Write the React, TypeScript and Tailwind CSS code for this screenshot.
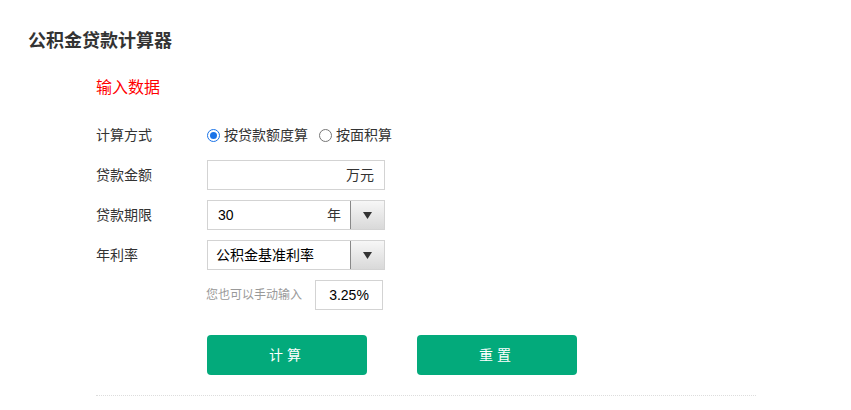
import { useState } from 'react'

const font = "font-['Liberation_Sans','Noto_Sans_CJK_SC',sans-serif]"

function Radio({ checked, label, onClick }: { checked: boolean; label: string; onClick: () => void }) {
  return (
    <label onClick={onClick} className="flex items-center gap-[4px] cursor-pointer">
      <span
        className={`w-[13px] h-[13px] rounded-full border flex items-center justify-center bg-white ${
          checked ? 'border-[#1a73e8]' : 'border-[#767676]'
        }`}
      >
        {checked && <span className="w-[7px] h-[7px] rounded-full bg-[#1a73e8]" />}
      </span>
      <span>{label}</span>
    </label>
  )
}

function Caret() {
  return (
    <div className="w-[34px] h-full border-l border-[#888] bg-gradient-to-b from-[#f7f7f7] to-[#d9d9d9] flex items-center justify-center">
      <svg width="9" height="7" viewBox="0 0 9 7">
        <path d="M0 0h9L4.5 7z" fill="#333" />
      </svg>
    </div>
  )
}

export default function App() {
  const [mode, setMode] = useState<'amount' | 'area'>('amount')

  return (
    <div className={`w-[851px] h-[410px] bg-white text-[#333] ${font}`}>
      <h1 className="pt-[29px] pl-[28px] text-[18px] leading-[24px] font-bold text-[#333]">公积金贷款计算器</h1>

      <div className="ml-[96px] w-[660px]">
        <h2 className="mt-[25px] text-[16px] leading-[20px] text-[#ff0000]">输入数据</h2>

        <div className="text-[14px]">
          {/* 计算方式 */}
          <div className="mt-[27px] flex items-center h-[20px]">
            <span className="w-[111px]">计算方式</span>
            <div className="flex items-center gap-[11px]">
              <Radio checked={mode === 'amount'} label="按贷款额度算" onClick={() => setMode('amount')} />
              <Radio checked={mode === 'area'} label="按面积算" onClick={() => setMode('area')} />
            </div>
          </div>

          {/* 贷款金额 */}
          <div className="mt-[15px] flex items-center h-[30px]">
            <span className="w-[111px]">贷款金额</span>
            <div className="w-[178px] h-[30px] border border-[#d3d3d3] flex items-center justify-end pr-[10px]">
              万元
            </div>
          </div>

          {/* 贷款期限 */}
          <div className="mt-[10px] flex items-center h-[30px]">
            <span className="w-[111px]">贷款期限</span>
            <div className="w-[178px] h-[30px] border border-[#d3d3d3] flex items-center">
              <span className="flex-1 pl-[10px] text-black">30</span>
              <span className="pr-[9px]">年</span>
              <Caret />
            </div>
          </div>

          {/* 年利率 */}
          <div className="mt-[10px] flex items-center h-[30px]">
            <span className="w-[111px]">年利率</span>
            <div className="w-[178px] h-[30px] border border-[#d3d3d3] flex items-center">
              <span className="flex-1 pl-[8px] text-black">公积金基准利率</span>
              <Caret />
            </div>
          </div>

          {/* 手动输入 */}
          <div className="mt-[10px] flex items-center h-[30px] pl-[110px]">
            <span className="w-[109px] text-[12px] text-[#999]">您也可以手动输入</span>
            <div className="w-[68px] h-[30px] border border-[#d3d3d3] flex items-center justify-center text-black">
              3.25%
            </div>
          </div>
        </div>

        {/* 按钮 */}
        <div className="mt-[25px] pl-[111px] flex gap-[50px]">
          <button className="w-[160px] h-[40px] rounded-[4px] bg-[#03aa7b] text-white text-[14px] tracking-[4px]">
            计算
          </button>
          <button className="w-[160px] h-[40px] rounded-[4px] bg-[#03aa7b] text-white text-[14px] tracking-[4px]">
            重置
          </button>
        </div>

        <div className="mt-[20px] border-t border-dotted border-[#ddd]" />
      </div>
    </div>
  )
}
